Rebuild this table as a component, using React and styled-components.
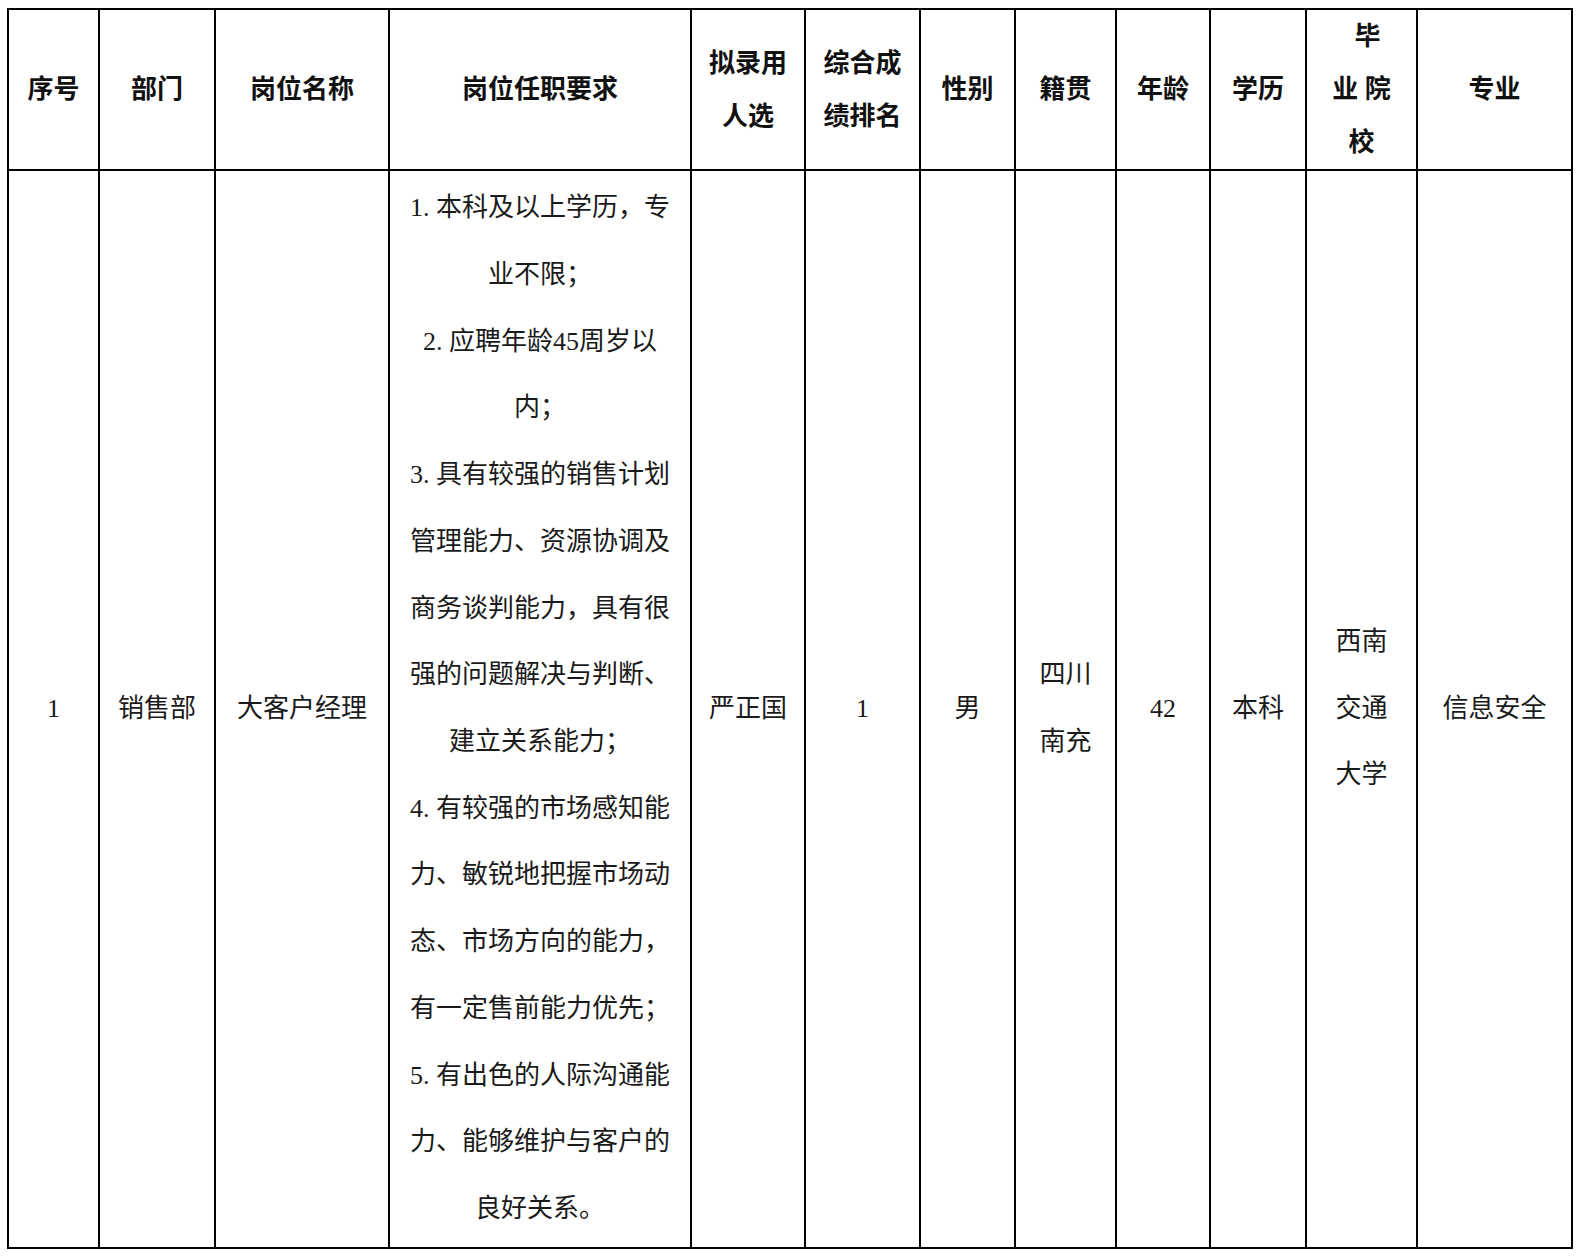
import React from "react"
import styled, { createGlobalStyle } from "styled-components"

const GlobalStyle = createGlobalStyle`
  body {
    margin: 0;
    background: #ffffff;
    font-family: "Liberation Serif", "Noto Sans CJK SC", serif;
    color: #111111;
  }
`

const Page = styled.div`
  padding: 8px 0 0 7px;
`

const Table = styled.table`
  border-collapse: collapse;
  table-layout: fixed;
  width: 1564px;
`

const HeadCell = styled.th`
  border: 2px solid #000;
  height: 157px;
  padding: 0;
  font-size: 26px;
  font-weight: 700;
  line-height: 53px;
  text-align: center;
  vertical-align: middle;
`

const Cell = styled.td`
  border: 2px solid #000;
  height: 1076px;
  padding: 0;
  font-size: 26px;
  font-weight: 400;
  line-height: 66.7px;
  text-align: center;
  vertical-align: middle;
  color: #1a1a1a;
`

const Line = styled.span`
  display: block;
  white-space: nowrap;
  padding-left: ${(p) => p.$shift || 0}px;
`

const widths = [91, 116, 174, 302, 114, 115, 95, 101, 94, 96, 111, 155]

const headers = [
  ["序号"],
  ["部门"],
  ["岗位名称"],
  ["岗位任职要求"],
  ["拟录用", "人选"],
  ["综合成", "绩排名"],
  ["性别"],
  ["籍贯"],
  ["年龄"],
  ["学历"],
  [{ t: "毕", shift: 12 }, "业\u00a0院", "校"],
  ["专业"],
]

const requirements = [
  "1. 本科及以上学历，专",
  "业不限；",
  "2. 应聘年龄45周岁以",
  "内；",
  "3. 具有较强的销售计划",
  "管理能力、资源协调及",
  "商务谈判能力，具有很",
  "强的问题解决与判断、",
  "建立关系能力；",
  "4. 有较强的市场感知能",
  "力、敏锐地把握市场动",
  "态、市场方向的能力，",
  "有一定售前能力优先；",
  "5. 有出色的人际沟通能",
  "力、能够维护与客户的",
  "良好关系。",
]

const row = [
  ["1"],
  ["销售部"],
  ["大客户经理"],
  requirements,
  ["严正国"],
  ["1"],
  ["男"],
  ["四川", "南充"],
  ["42"],
  ["本科"],
  ["西南", "交通", "大学"],
  ["信息安全"],
]

const renderLines = (lines) =>
  lines.map((l, i) =>
    typeof l === "string" ? (
      <Line key={i}>{l}</Line>
    ) : (
      <Line key={i} $shift={l.shift}>
        {l.t}
      </Line>
    )
  )

const App = () => {
  return (
    <Page>
      <GlobalStyle />
      <Table>
        <colgroup>
          {widths.map((w, i) => (
            <col key={i} style={{ width: w }} />
          ))}
        </colgroup>
        <thead>
          <tr>
            {headers.map((h, i) => (
              <HeadCell key={i}>{renderLines(h)}</HeadCell>
            ))}
          </tr>
        </thead>
        <tbody>
          <tr>
            {row.map((c, i) => (
              <Cell key={i}>{renderLines(c)}</Cell>
            ))}
          </tr>
        </tbody>
      </Table>
    </Page>
  )
}

export default App
